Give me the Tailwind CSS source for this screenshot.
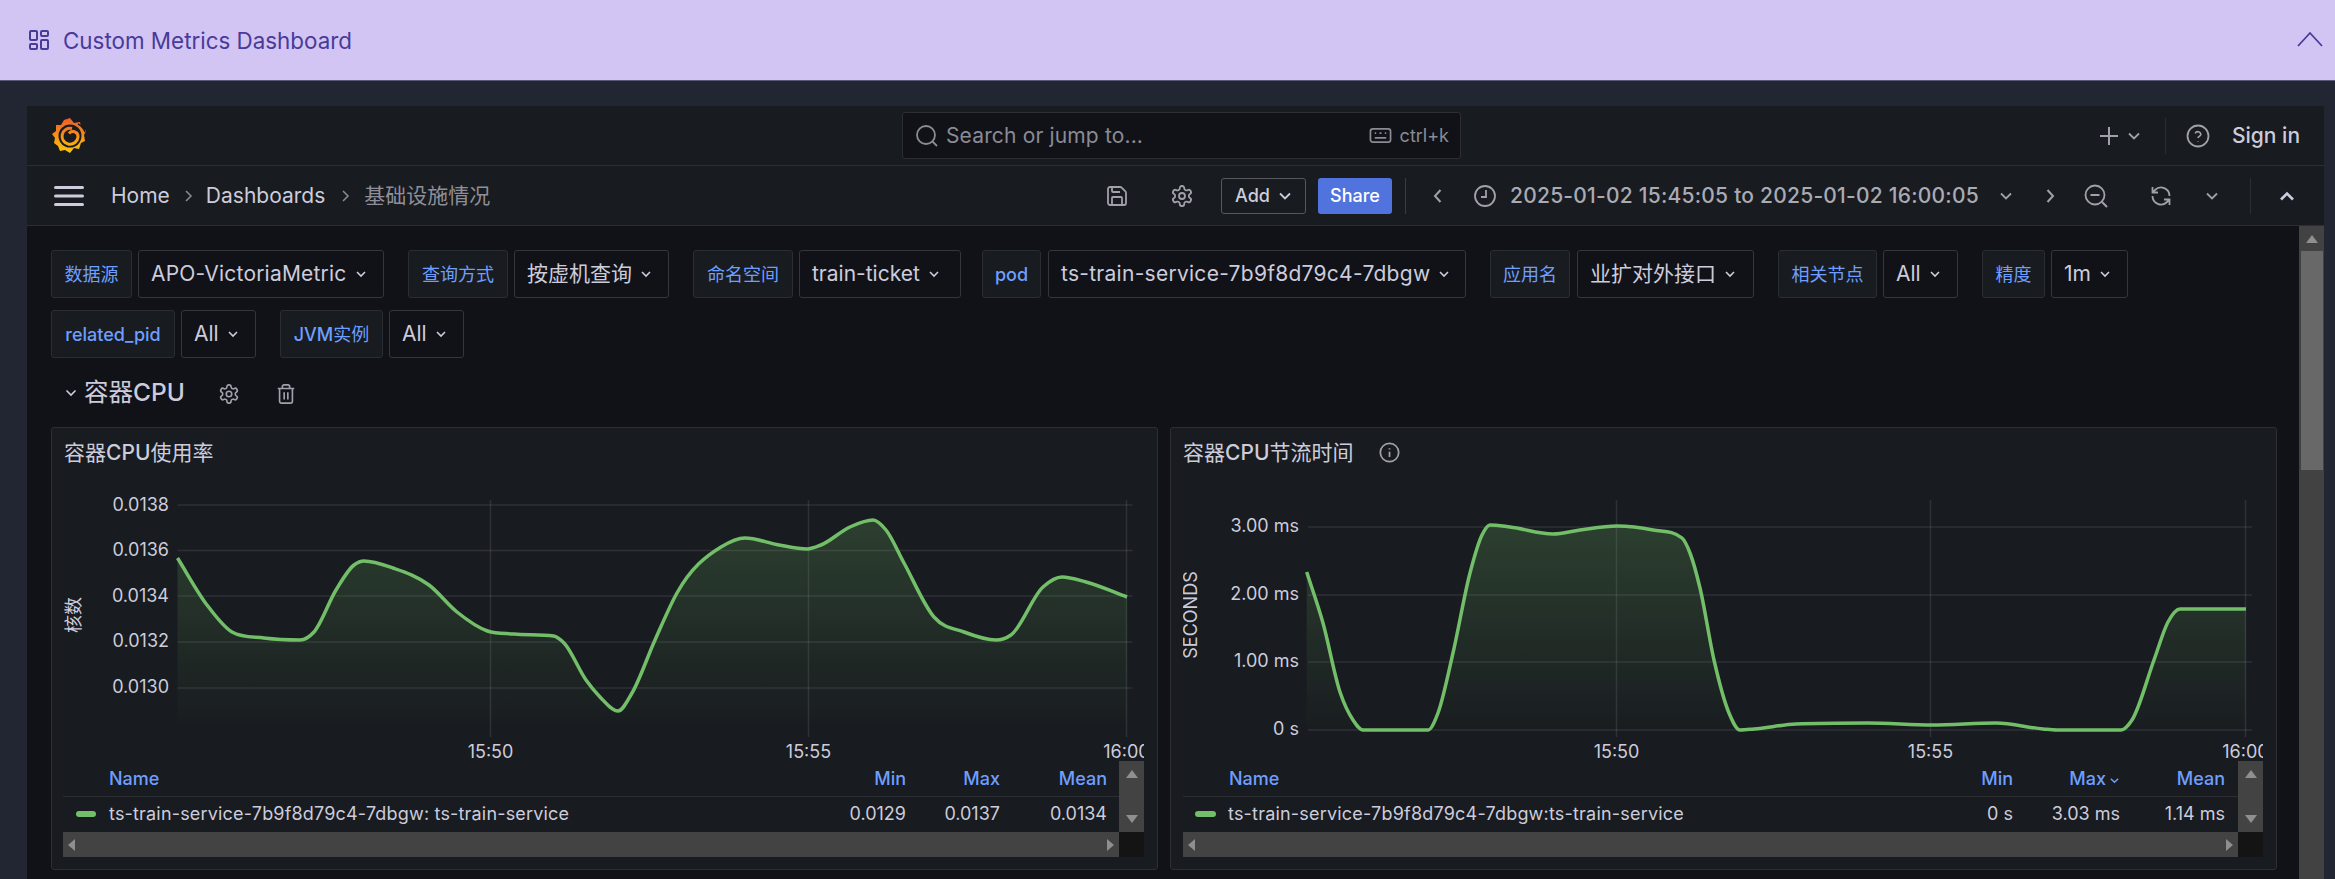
<!DOCTYPE html>
<html lang="zh">
<head>
<meta charset="utf-8">
<title>Custom Metrics Dashboard</title>
<script src="https://cdn.jsdelivr.net/npm/@tailwindcss/browser@4"></script>
</head>
<body>
<div class="w-[2335px] h-[879px] overflow-hidden flex flex-col bg-[#222632] font-[family-name:Inter,'Noto_Sans_CJK_SC',sans-serif] text-[#ccccdc] text-[21px]">

  <!-- app banner -->
  <div class="h-[81px] shrink-0 flex items-center bg-[#d2c5f3] border-b border-[#5c5878] pl-[27px] pr-[12px] text-[#483b99]">
    <svg class="w-[24px] h-[24px]" viewBox="0 0 24 24" fill="none" stroke="currentColor" stroke-width="2"><rect x="3" y="3" width="7" height="9" rx="1"/><rect x="14" y="3" width="7" height="5" rx="1"/><rect x="14" y="12" width="7" height="9" rx="1"/><rect x="3" y="16" width="7" height="5" rx="1"/></svg>
    <span class="ml-[12px] mt-[2px] leading-none text-[22.4px]">Custom Metrics Dashboard</span>
    <svg class="ml-auto w-[26px] h-[16px] -mt-[3px]" viewBox="0 0 26 16" fill="none" stroke="currentColor" stroke-width="1.8"><path d="M1 15 13 2l12 13"/></svg>
  </div>

  <div class="flex-1 min-h-0 ml-[27px] mr-[11px] mt-[25px] flex flex-col">
    <!-- top nav -->
    <div class="h-[60px] shrink-0 flex items-center bg-[#181b1f] border-b border-[#2c2e33]">
      <div class="w-[875px] shrink-0 pl-[25px]">
        <svg class="w-[34px] h-[36px]" viewBox="52 118 34 36">
          <defs><linearGradient id="logo" gradientUnits="userSpaceOnUse" x1="69" y1="118" x2="69" y2="154"><stop offset="0" stop-color="#f05a28"/><stop offset="1" stop-color="#fbca0a"/></linearGradient></defs>
          <polygon fill="url(#logo)" points="70,118 74,123 80,122 81,127 86,131 84,135 85,141 81,143 79,149 74,148 70,153 65,150 60,151 58,146 54,143 55,138 52,134 56,131 56,125 61,125 64,120"/>
          <circle cx="70" cy="136" r="11.5" fill="#181b1f"/>
          <path d="M72 128.500A8 8 0 1 0 78 137A5 5 0 0 0 69 133.500" fill="none" stroke="url(#logo)" stroke-width="3"/>
          <path d="M78 124A13.500 13.500 0 0 1 85 132" fill="none" stroke="#181b1f" stroke-width="1.500"/>
        </svg>
      </div>
      <div class="w-[559px] h-[47px] shrink-0 flex items-center bg-[#111217] border border-[#2c2e33] rounded-[3px] pl-[12px] pr-[11px] text-[#8a8b95]">
        <svg class="w-[24px] h-[24px]" viewBox="0 0 24 24" fill="none" stroke="currentColor" stroke-width="1.800"><circle cx="11" cy="11" r="9"/><path d="m22 22-4.500-4.500"/></svg>
        <span class="ml-[7px] tracking-[0.15px]">Search or jump to...</span>
        <svg class="ml-auto w-[23px] h-[23px]" viewBox="0 0 24 24" fill="none" stroke="currentColor" stroke-width="1.800"><rect x="1.500" y="5" width="21" height="14" rx="2.500"/><path d="M6 9.500h1.500M11 9.500h2M16.500 9.500H18M6 14.500h12" stroke-width="2"/></svg>
        <span class="ml-[8px] text-[18px]">ctrl+k</span>
      </div>
      <div class="flex-1 flex items-center pl-[637px] text-[#a0a1ab]">
        <svg class="w-[22px] h-[22px]" viewBox="0 0 22 22" fill="none" stroke="currentColor" stroke-width="2"><path d="M11 2v18M2 11h18"/></svg>
        <svg class="ml-[7px] w-[14px] h-[14px]" viewBox="0 0 14 14" fill="none" stroke="currentColor" stroke-width="1.800"><path d="m2 4.500 5 5 5-5"/></svg>
        <div class="ml-[24px] w-px h-[36px] bg-[#2c2e33]"></div>
        <svg class="ml-[20px] w-[24px] h-[24px]" viewBox="0 0 24 24" fill="none" stroke="currentColor" stroke-width="1.800"><circle cx="12" cy="12" r="10.500"/><path d="M9.200 9.500a2.900 2.900 0 0 1 5.600 1c0 1.800-2.800 2-2.800 3.500M12 17v.5" stroke-width="1.600"/></svg>
        <span class="ml-[22px] text-[#ccccdc] font-medium">Sign in</span>
      </div>
    </div>

    <!-- dashboard toolbar -->
    <div class="h-[60px] shrink-0 flex items-center bg-[#181b1f] border-b border-[#2c2e33] pr-[29px]">
      <svg class="ml-[27px] w-[30px] h-[22px]" viewBox="0 0 30 22" fill="#ccccdc"><rect y="1" width="30" height="3" rx="1.500"/><rect y="9.500" width="30" height="3" rx="1.500"/><rect y="18" width="30" height="3" rx="1.500"/></svg>
      <span class="ml-[27px]">Home</span>
      <svg class="mx-[12px] w-[12px] h-[14px] text-[#8a8b95]" viewBox="0 0 12 14" fill="none" stroke="currentColor" stroke-width="1.500"><path d="m4 2 5 5-5 5"/></svg>
      <span>Dashboards</span>
      <svg class="ml-[14px] mr-[13px] w-[12px] h-[14px] text-[#8a8b95]" viewBox="0 0 12 14" fill="none" stroke="currentColor" stroke-width="1.500"><path d="m4 2 5 5-5 5"/></svg>
      <span class="text-[#8e8f99]">基础设施情况</span>

      <svg class="ml-auto w-[24px] h-[24px] text-[#a0a1ab]" viewBox="0 0 24 24" fill="none" stroke="currentColor" stroke-width="1.800"><path d="M15.200 3a2 2 0 0 1 1.400.6l3.800 3.800a2 2 0 0 1 .6 1.400V19a2 2 0 0 1-2 2H5a2 2 0 0 1-2-2V5a2 2 0 0 1 2-2z"/><path d="M17 21v-7a1 1 0 0 0-1-1H8a1 1 0 0 0-1 1v7M7 3v4a1 1 0 0 0 1 1h7"/></svg>
      <svg class="ml-[41px] w-[24px] h-[24px] text-[#a0a1ab]" viewBox="0 0 24 24" fill="none" stroke="currentColor" stroke-width="1.800"><path d="M12.220 2h-.44a2 2 0 0 0-2 2v.18a2 2 0 0 1-1 1.730l-.43.25a2 2 0 0 1-2 0l-.15-.08a2 2 0 0 0-2.730.73l-.22.38a2 2 0 0 0 .73 2.730l.15.1a2 2 0 0 1 1 1.720v.51a2 2 0 0 1-1 1.740l-.15.09a2 2 0 0 0-.73 2.730l.22.38a2 2 0 0 0 2.730.73l.15-.08a2 2 0 0 1 2 0l.43.25a2 2 0 0 1 1 1.730V20a2 2 0 0 0 2 2h.44a2 2 0 0 0 2-2v-.18a2 2 0 0 1 1-1.730l.43-.25a2 2 0 0 1 2 0l.15.08a2 2 0 0 0 2.730-.73l.22-.39a2 2 0 0 0-.73-2.730l-.15-.08a2 2 0 0 1-1-1.740v-.5a2 2 0 0 1 1-1.740l.15-.09a2 2 0 0 0 .73-2.730l-.22-.38a2 2 0 0 0-2.730-.73l-.15.08a2 2 0 0 1-2 0l-.43-.25a2 2 0 0 1-1-1.730V4a2 2 0 0 0-2-2z"/><circle cx="12" cy="12" r="3"/></svg>
      <div class="ml-[27px] w-[85px] h-[36px] flex items-center justify-center gap-[8px] border border-[#55575e] rounded-[3px] text-[18px] font-medium">Add<svg class="w-[14px] h-[14px]" viewBox="0 0 14 14" fill="none" stroke="currentColor" stroke-width="1.800"><path d="m2 4.500 5 5 5-5"/></svg></div>
      <div class="ml-[12px] w-[74px] h-[36px] flex items-center justify-center bg-[#5173dd] rounded-[3px] text-[18px] font-medium text-white">Share</div>
      <div class="ml-[13px] w-px h-[36px] bg-[#3a3c42]"></div>
      <svg class="ml-[24px] w-[16px] h-[16px] text-[#a0a1ab]" viewBox="0 0 16 16" fill="none" stroke="currentColor" stroke-width="2"><path d="M10.500 2 5 8l5.500 6"/></svg>
      <svg class="ml-[27px] w-[24px] h-[24px] text-[#a0a1ab]" viewBox="0 0 24 24" fill="none" stroke="currentColor" stroke-width="1.800"><circle cx="12" cy="12" r="10"/><path d="M13 6v7H8"/></svg>
      <span class="ml-[13px] w-[467px] shrink-0 whitespace-nowrap text-[#a9aab4] font-medium tracking-[0.23px]">2025-01-02 15:45:05 to 2025-01-02 16:00:05</span>
      <svg class="ml-[21px] w-[16px] h-[16px] text-[#a0a1ab]" viewBox="0 0 16 16" fill="none" stroke="currentColor" stroke-width="1.800"><path d="m3 5.500 5 5 5-5"/></svg>
      <svg class="ml-[28px] w-[16px] h-[16px] text-[#a0a1ab]" viewBox="0 0 16 16" fill="none" stroke="currentColor" stroke-width="2"><path d="M5.500 2 11 8l-5.500 6"/></svg>
      <svg class="ml-[26px] w-[24px] h-[24px] text-[#a0a1ab]" viewBox="0 0 24 24" fill="none" stroke="currentColor" stroke-width="1.800"><circle cx="11" cy="11" r="9.500"/><path d="m18 18 5 5M6.500 11h9" stroke-width="2"/></svg>
      <svg class="ml-[41px] w-[24px] h-[24px] text-[#a0a1ab]" viewBox="0 0 24 24" fill="none" stroke="currentColor" stroke-width="1.800"><path d="M20.500 12A8.500 8.500 0 0 0 6 6L3.500 8.500M3.500 3v5.500H9M3.500 12A8.500 8.500 0 0 0 18 18l2.500-2.500M20.500 21v-5.500H15"/></svg>
      <svg class="ml-[31px] w-[16px] h-[16px] text-[#a0a1ab]" viewBox="0 0 16 16" fill="none" stroke="currentColor" stroke-width="1.800"><path d="m3 5.500 5 5 5-5"/></svg>
      <div class="ml-[30px] w-px h-[36px] bg-[#2c2e33]"></div>
      <svg class="ml-[28px] w-[16px] h-[16px] text-[#ccccdc]" viewBox="0 0 16 16" fill="none" stroke="currentColor" stroke-width="2.600"><path d="m2 11.500 6-6 6 6"/></svg>
    </div>

    <!-- scroll area -->
    <div class="flex-1 min-h-0 flex bg-[#111217]">
      <div class="flex-1 min-w-0 pl-[24px] pt-[24px]">
        <!-- variables -->
        <div class="flex h-[48px] text-[18px]">
          <div class="w-[81px] flex items-center justify-center bg-[#181b1f] border border-[#2a2d32] rounded-[3px] text-[#6e9fff]">数据源</div>
          <div class="ml-[6px] w-[246px] flex items-center pl-[12px] bg-[#111217] border border-[#34363c] rounded-[3px] text-[21px] whitespace-nowrap tracking-[0.2px]">APO-VictoriaMetric<svg class="ml-[8px] w-[12px] h-[12px]" viewBox="0 0 12 12" fill="none" stroke="currentColor" stroke-width="1.600"><path d="m2 4 4 4 4-4"/></svg></div>
          <div class="ml-[24px] w-[100px] flex items-center justify-center bg-[#181b1f] border border-[#2a2d32] rounded-[3px] text-[#6e9fff]">查询方式</div>
          <div class="ml-[6px] w-[155px] flex items-center pl-[12px] bg-[#111217] border border-[#34363c] rounded-[3px] text-[21px] whitespace-nowrap">按虚机查询<svg class="ml-[8px] w-[12px] h-[12px]" viewBox="0 0 12 12" fill="none" stroke="currentColor" stroke-width="1.600"><path d="m2 4 4 4 4-4"/></svg></div>
          <div class="ml-[24px] w-[100px] flex items-center justify-center bg-[#181b1f] border border-[#2a2d32] rounded-[3px] text-[#6e9fff]">命名空间</div>
          <div class="ml-[6px] w-[162px] flex items-center pl-[12px] bg-[#111217] border border-[#34363c] rounded-[3px] text-[21px] whitespace-nowrap">train-ticket<svg class="ml-[8px] w-[12px] h-[12px]" viewBox="0 0 12 12" fill="none" stroke="currentColor" stroke-width="1.600"><path d="m2 4 4 4 4-4"/></svg></div>
          <div class="ml-[21px] w-[59px] flex items-center justify-center bg-[#181b1f] border border-[#2a2d32] rounded-[3px] text-[#6e9fff] font-medium">pod</div>
          <div class="ml-[7px] w-[418px] flex items-center pl-[12px] bg-[#111217] border border-[#34363c] rounded-[3px] text-[21px] whitespace-nowrap tracking-[0.27px]">ts-train-service-7b9f8d79c4-7dbgw<svg class="ml-[8px] w-[12px] h-[12px]" viewBox="0 0 12 12" fill="none" stroke="currentColor" stroke-width="1.600"><path d="m2 4 4 4 4-4"/></svg></div>
          <div class="ml-[24px] w-[80px] flex items-center justify-center bg-[#181b1f] border border-[#2a2d32] rounded-[3px] text-[#6e9fff]">应用名</div>
          <div class="ml-[7px] w-[177px] flex items-center pl-[12px] bg-[#111217] border border-[#34363c] rounded-[3px] text-[21px] whitespace-nowrap">业扩对外接口<svg class="ml-[8px] w-[12px] h-[12px]" viewBox="0 0 12 12" fill="none" stroke="currentColor" stroke-width="1.600"><path d="m2 4 4 4 4-4"/></svg></div>
          <div class="ml-[24px] w-[99px] flex items-center justify-center bg-[#181b1f] border border-[#2a2d32] rounded-[3px] text-[#6e9fff]">相关节点</div>
          <div class="ml-[6px] w-[75px] flex items-center pl-[12px] bg-[#111217] border border-[#34363c] rounded-[3px] text-[21px] whitespace-nowrap">All<svg class="ml-[8px] w-[12px] h-[12px]" viewBox="0 0 12 12" fill="none" stroke="currentColor" stroke-width="1.600"><path d="m2 4 4 4 4-4"/></svg></div>
          <div class="ml-[24px] w-[63px] flex items-center justify-center bg-[#181b1f] border border-[#2a2d32] rounded-[3px] text-[#6e9fff]">精度</div>
          <div class="ml-[6px] w-[77px] flex items-center pl-[12px] bg-[#111217] border border-[#34363c] rounded-[3px] text-[21px] whitespace-nowrap">1m<svg class="ml-[8px] w-[12px] h-[12px]" viewBox="0 0 12 12" fill="none" stroke="currentColor" stroke-width="1.600"><path d="m2 4 4 4 4-4"/></svg></div>
        </div>
        <div class="flex h-[48px] mt-[12px] text-[18px]">
          <div class="w-[124px] flex items-center justify-center bg-[#181b1f] border border-[#2a2d32] rounded-[3px] text-[#6e9fff] font-medium">related_pid</div>
          <div class="ml-[6px] w-[75px] flex items-center pl-[12px] bg-[#111217] border border-[#34363c] rounded-[3px] text-[21px]">All<svg class="ml-[8px] w-[12px] h-[12px]" viewBox="0 0 12 12" fill="none" stroke="currentColor" stroke-width="1.600"><path d="m2 4 4 4 4-4"/></svg></div>
          <div class="ml-[24px] w-[103px] flex items-center justify-center bg-[#181b1f] border border-[#2a2d32] rounded-[3px] text-[#6e9fff]"><span class="font-medium">JVM</span>实例</div>
          <div class="ml-[6px] w-[75px] flex items-center pl-[12px] bg-[#111217] border border-[#34363c] rounded-[3px] text-[21px]">All<svg class="ml-[8px] w-[12px] h-[12px]" viewBox="0 0 12 12" fill="none" stroke="currentColor" stroke-width="1.600"><path d="m2 4 4 4 4-4"/></svg></div>
        </div>

        <!-- row title -->
        <div class="h-[69px] flex items-center pl-[14px]">
          <svg class="w-[12px] h-[12px] text-[#ccccdc]" viewBox="0 0 12 12" fill="none" stroke="currentColor" stroke-width="1.600"><path d="m1.500 3.500 4.500 4.500 4.500-4.500"/></svg>
          <span class="ml-[7px] w-[99px] text-[24.5px] whitespace-nowrap">容器<span class="font-medium">CPU</span></span>
          <svg class="ml-[35px] w-[22px] h-[22px] text-[#a0a1ab] mt-[3px]" viewBox="0 0 24 24" fill="none" stroke="currentColor" stroke-width="1.800"><path d="M12.220 2h-.44a2 2 0 0 0-2 2v.18a2 2 0 0 1-1 1.730l-.43.25a2 2 0 0 1-2 0l-.15-.08a2 2 0 0 0-2.730.73l-.22.38a2 2 0 0 0 .73 2.730l.15.1a2 2 0 0 1 1 1.720v.51a2 2 0 0 1-1 1.740l-.15.09a2 2 0 0 0-.73 2.730l.22.38a2 2 0 0 0 2.730.73l.15-.08a2 2 0 0 1 2 0l.43.25a2 2 0 0 1 1 1.730V20a2 2 0 0 0 2 2h.44a2 2 0 0 0 2-2v-.18a2 2 0 0 1 1-1.730l.43-.25a2 2 0 0 1 2 0l.15.08a2 2 0 0 0 2.730-.73l.22-.39a2 2 0 0 0-.73-2.730l-.15-.08a2 2 0 0 1-1-1.740v-.5a2 2 0 0 1 1-1.740l.15-.09a2 2 0 0 0 .73-2.730l-.22-.38a2 2 0 0 0-2.730-.73l-.15.08a2 2 0 0 1-2 0l-.43-.25a2 2 0 0 1-1-1.730V4a2 2 0 0 0-2-2z"/><circle cx="12" cy="12" r="3"/></svg>
          <svg class="ml-[35px] w-[22px] h-[22px] text-[#a0a1ab] mt-[3px]" viewBox="0 0 24 24" fill="none" stroke="currentColor" stroke-width="1.800"><path d="M3 6h18M19 6v14a2 2 0 0 1-2 2H7a2 2 0 0 1-2-2V6M8 6V4a2 2 0 0 1 2-2h4a2 2 0 0 1 2 2v2M10 10v8M14 10v8"/></svg>
        </div>

        <!-- panels -->
        <div class="grid grid-cols-[1107px_1107px] gap-x-[12px]">
          <!-- panel 1 -->
          <div class="h-[443px] bg-[#181b1f] border border-[#2c2e33] rounded-[3px] pl-[11px] pr-[13px] flex flex-col">
            <div class="h-[47px] shrink-0 flex items-center pl-[1px] pt-[3px] text-[21px]">容器<span class="font-medium">CPU</span>使用率</div>
            <svg id="c1" class="w-[1081px] h-[286px] shrink-0 block" viewBox="63 475 1081 286" font-size="18" fill="#ccccdc">
              <defs><linearGradient id="g1" gradientUnits="userSpaceOnUse" x1="0" y1="520" x2="0" y2="723"><stop offset="0" stop-color="#73bf69" stop-opacity=".22"/><stop offset="1" stop-color="#73bf69" stop-opacity=".01"/></linearGradient></defs>
              <g stroke="#ccccdc" stroke-opacity=".12" stroke-width="1.500" fill="none">
                <path d="M177.500 505H1132.500M177.500 550.500H1132.500M177.500 596H1132.500M177.500 642H1132.500M177.500 688H1132.500"/>
                <path d="M490.500 500V737M808.500 500V737M1126.500 500V737"/>
              </g>
              <path data-fill="723" fill="url(#g1)" data-points="177.5,558 207,605 232,632 264,638 300,640 314,632 336,590 354,565 364,561 393,568 429,585 457,612 487.5,631 514,634 553.6,636 564,643 586,680 600,697 618,711 632,693 655,640 677,593 721,547 745,538 779,545 807,549 821,545 850,527 873,520 886,530 904,563 934,617 964,632 996,640 1011,635 1043,587 1062,577 1086,582 1127,597"/>
              <path data-line="1" fill="none" stroke="#73bf69" stroke-width="3.5" stroke-linejoin="round" data-points="177.5,558 207,605 232,632 264,638 300,640 314,632 336,590 354,565 364,561 393,568 429,585 457,612 487.5,631 514,634 553.6,636 564,643 586,680 600,697 618,711 632,693 655,640 677,593 721,547 745,538 779,545 807,549 821,545 850,527 873,520 886,530 904,563 934,617 964,632 996,640 1011,635 1043,587 1062,577 1086,582 1127,597"/>
              <g text-anchor="end">
                <text x="169" y="511">0.0138</text><text x="169" y="556">0.0136</text><text x="169" y="602">0.0134</text><text x="169" y="647">0.0132</text><text x="169" y="693">0.0130</text>
              </g>
              <g text-anchor="middle">
                <text x="490.500" y="758">15:50</text><text x="808.500" y="758">15:55</text><text x="1126.500" y="758">16:00</text>
                <text transform="translate(80 615) rotate(-90)">核数</text>
              </g>
            </svg>
            <div class="grid grid-cols-[1fr_25px] grid-rows-[71px_25px] text-[18px]">
              <div class="min-w-0">
                <div class="h-[36px] flex items-center border-b border-[#2c2e33] pl-[46px] pr-[12px] font-medium text-[#6e9fff]">
                  <span class="flex-1">Name</span><span class="w-[80px] text-right">Min</span><span class="w-[94px] text-right">Max</span><span class="w-[107px] text-right">Mean</span>
                </div>
                <div class="h-[35px] flex items-center pl-[13px] pr-[12px] pb-[2px]">
                  <span class="w-[20px] h-[6px] rounded-[3px] bg-[#73bf69]"></span>
                  <span class="ml-[13px] flex-1 whitespace-nowrap tracking-[0.18px]">ts-train-service-7b9f8d79c4-7dbgw: ts-train-service</span>
                  <span class="w-[80px] text-right">0.0129</span><span class="w-[94px] text-right">0.0137</span><span class="w-[107px] text-right">0.0134</span>
                </div>
              </div>
              <div class="bg-[#434343] flex flex-col items-center justify-between py-[9px]">
                <svg class="w-[12px] h-[8px]" viewBox="0 0 12 8" fill="#8f8f8f"><path d="M6 0l6 8H0z"/></svg>
                <svg class="w-[12px] h-[8px]" viewBox="0 0 12 8" fill="#8f8f8f"><path d="M6 8 12 0H0z"/></svg>
              </div>
              <div class="bg-[#434343] flex items-center justify-between px-[5px]">
                <svg class="w-[7px] h-[12px]" viewBox="0 0 7 12" fill="#8f8f8f"><path d="M0 6l7-6v12z"/></svg>
                <svg class="w-[7px] h-[12px]" viewBox="0 0 7 12" fill="#8f8f8f"><path d="M7 6 0 0v12z"/></svg>
              </div>
              <div class="bg-[#141414]"></div>
            </div>
          </div>

          <!-- panel 2 -->
          <div class="h-[443px] bg-[#181b1f] border border-[#2c2e33] rounded-[3px] pl-[12px] pr-[13px] flex flex-col">
            <div class="h-[47px] shrink-0 flex items-center pt-[2px] text-[21px]">容器<span class="font-medium">CPU</span>节流时间
              <svg class="ml-[26px] w-[21px] h-[21px] text-[#a0a1ab]" viewBox="0 0 24 24" fill="none" stroke="currentColor" stroke-width="2"><circle cx="12" cy="12" r="10.500"/><path d="M12 11v6M12 7v1.500"/></svg>
            </div>
            <svg id="c2" class="w-[1080px] h-[286px] shrink-0 block" viewBox="1183 475 1080 286" font-size="18" fill="#ccccdc">
              <defs><linearGradient id="g2" gradientUnits="userSpaceOnUse" x1="0" y1="525" x2="0" y2="730"><stop offset="0" stop-color="#73bf69" stop-opacity=".22"/><stop offset="1" stop-color="#73bf69" stop-opacity=".01"/></linearGradient></defs>
              <g stroke="#ccccdc" stroke-opacity=".12" stroke-width="1.500" fill="none">
                <path d="M1308 527H2252M1308 595H2252M1308 662H2252M1308 730H2252"/>
                <path d="M1616.500 500V737M1930.500 500V737M2245.500 500V737"/>
              </g>
              <path data-fill="730" fill="url(#g2)" data-points="1306.7,572 1323,623 1340,692 1353,720 1363,730 1428,730 1438,713 1453,653 1470,573 1482,535 1490,525 1510,527 1553,534 1580,530 1617,526 1653,530 1682,538 1690,553 1700,588 1714,660 1729,713 1740,730 1754,729 1796,724 1868,723 1932,725 1996,723 2043,729 2057,730 2121,730 2132,720 2154,660 2168,622 2180,609 2246,609"/>
              <path data-line="1" fill="none" stroke="#73bf69" stroke-width="3.5" stroke-linejoin="round" data-points="1306.7,572 1323,623 1340,692 1353,720 1363,730 1428,730 1438,713 1453,653 1470,573 1482,535 1490,525 1510,527 1553,534 1580,530 1617,526 1653,530 1682,538 1690,553 1700,588 1714,660 1729,713 1740,730 1754,729 1796,724 1868,723 1932,725 1996,723 2043,729 2057,730 2121,730 2132,720 2154,660 2168,622 2180,609 2246,609"/>
              <g text-anchor="end">
                <text x="1299" y="532">3.00 ms</text><text x="1299" y="600">2.00 ms</text><text x="1299" y="667">1.00 ms</text><text x="1299" y="735">0 s</text>
              </g>
              <g text-anchor="middle">
                <text x="1616.500" y="758">15:50</text><text x="1930.500" y="758">15:55</text><text x="2245.500" y="758">16:00</text>
                <text transform="translate(1197 615) rotate(-90)" font-size="18">SECONDS</text>
              </g>
            </svg>
            <div class="grid grid-cols-[1fr_25px] grid-rows-[71px_25px] text-[18px]">
              <div class="min-w-0">
                <div class="h-[36px] flex items-center border-b border-[#2c2e33] pl-[46px] pr-[13px] font-medium text-[#6e9fff]">
                  <span class="flex-1">Name</span><span class="w-[80px] text-right">Min</span>
                  <span class="w-[107px] flex items-center justify-end">Max<svg class="ml-[3px] w-[11px] h-[11px] mt-[4px]" viewBox="0 0 12 12" fill="none" stroke="currentColor" stroke-width="1.600"><path d="m2 4 4 4 4-4"/></svg></span>
                  <span class="w-[105px] text-right">Mean</span>
                </div>
                <div class="h-[35px] flex items-center pl-[12px] pr-[13px] pb-[2px]">
                  <span class="w-[21px] h-[6px] rounded-[3px] bg-[#73bf69]"></span>
                  <span class="ml-[12px] flex-1 whitespace-nowrap tracking-[0.2px]">ts-train-service-7b9f8d79c4-7dbgw:ts-train-service</span>
                  <span class="w-[80px] text-right">0 s</span><span class="w-[107px] text-right">3.03 ms</span><span class="w-[105px] text-right">1.14 ms</span>
                </div>
              </div>
              <div class="bg-[#434343] flex flex-col items-center justify-between py-[9px]">
                <svg class="w-[12px] h-[8px]" viewBox="0 0 12 8" fill="#8f8f8f"><path d="M6 0l6 8H0z"/></svg>
                <svg class="w-[12px] h-[8px]" viewBox="0 0 12 8" fill="#8f8f8f"><path d="M6 8 12 0H0z"/></svg>
              </div>
              <div class="bg-[#434343] flex items-center justify-between px-[5px]">
                <svg class="w-[7px] h-[12px]" viewBox="0 0 7 12" fill="#8f8f8f"><path d="M0 6l7-6v12z"/></svg>
                <svg class="w-[7px] h-[12px]" viewBox="0 0 7 12" fill="#8f8f8f"><path d="M7 6 0 0v12z"/></svg>
              </div>
              <div class="bg-[#141414]"></div>
            </div>
          </div>
        </div>
      </div>

      <!-- page scrollbar -->
      <div class="w-[25px] shrink-0 bg-[#424242] flex flex-col items-center pt-[9px]">
        <svg class="w-[12px] h-[8px]" viewBox="0 0 12 8" fill="#8f8f8f"><path d="M6 0l6 8H0z"/></svg>
        <div class="mt-[8px] w-[22px] h-[219px] bg-[#686868]"></div>
      </div>
    </div>
  </div>
</div>
<script>
  // monotone cubic smoothing of the traced series
  document.querySelectorAll('path[data-points]').forEach(function (el) {
    var p = el.getAttribute('data-points').trim().split(/\s+/).map(function (s) { return s.split(',').map(Number); });
    var n = p.length, s = [], t = [];
    for (var i = 0; i < n - 1; i++) s.push((p[i + 1][1] - p[i][1]) / (p[i + 1][0] - p[i][0]));
    t[0] = s[0]; t[n - 1] = s[n - 2];
    for (var j = 1; j < n - 1; j++) {
      if (s[j - 1] * s[j] <= 0) { t[j] = 0; continue; }
      var h0 = p[j][0] - p[j - 1][0], h1 = p[j + 1][0] - p[j][0];
      var m = (s[j - 1] * h1 + s[j] * h0) / (h0 + h1);
      var lim = 3 * Math.min(Math.abs(s[j - 1]), Math.abs(s[j]));
      t[j] = Math.sign(m) * Math.min(Math.abs(m), lim);
    }
    var d = 'M' + p[0][0] + ' ' + p[0][1];
    for (var k = 0; k < n - 1; k++) {
      var h = (p[k + 1][0] - p[k][0]) / 3;
      d += 'C' + (p[k][0] + h) + ' ' + (p[k][1] + t[k] * h) + ' ' + (p[k + 1][0] - h) + ' ' + (p[k + 1][1] - t[k + 1] * h) + ' ' + p[k + 1][0] + ' ' + p[k + 1][1];
    }
    var base = el.getAttribute('data-fill');
    if (base) d += 'L' + p[n - 1][0] + ' ' + base + 'L' + p[0][0] + ' ' + base + 'Z';
    el.setAttribute('d', d);
  });
</script>
</body>
</html>
